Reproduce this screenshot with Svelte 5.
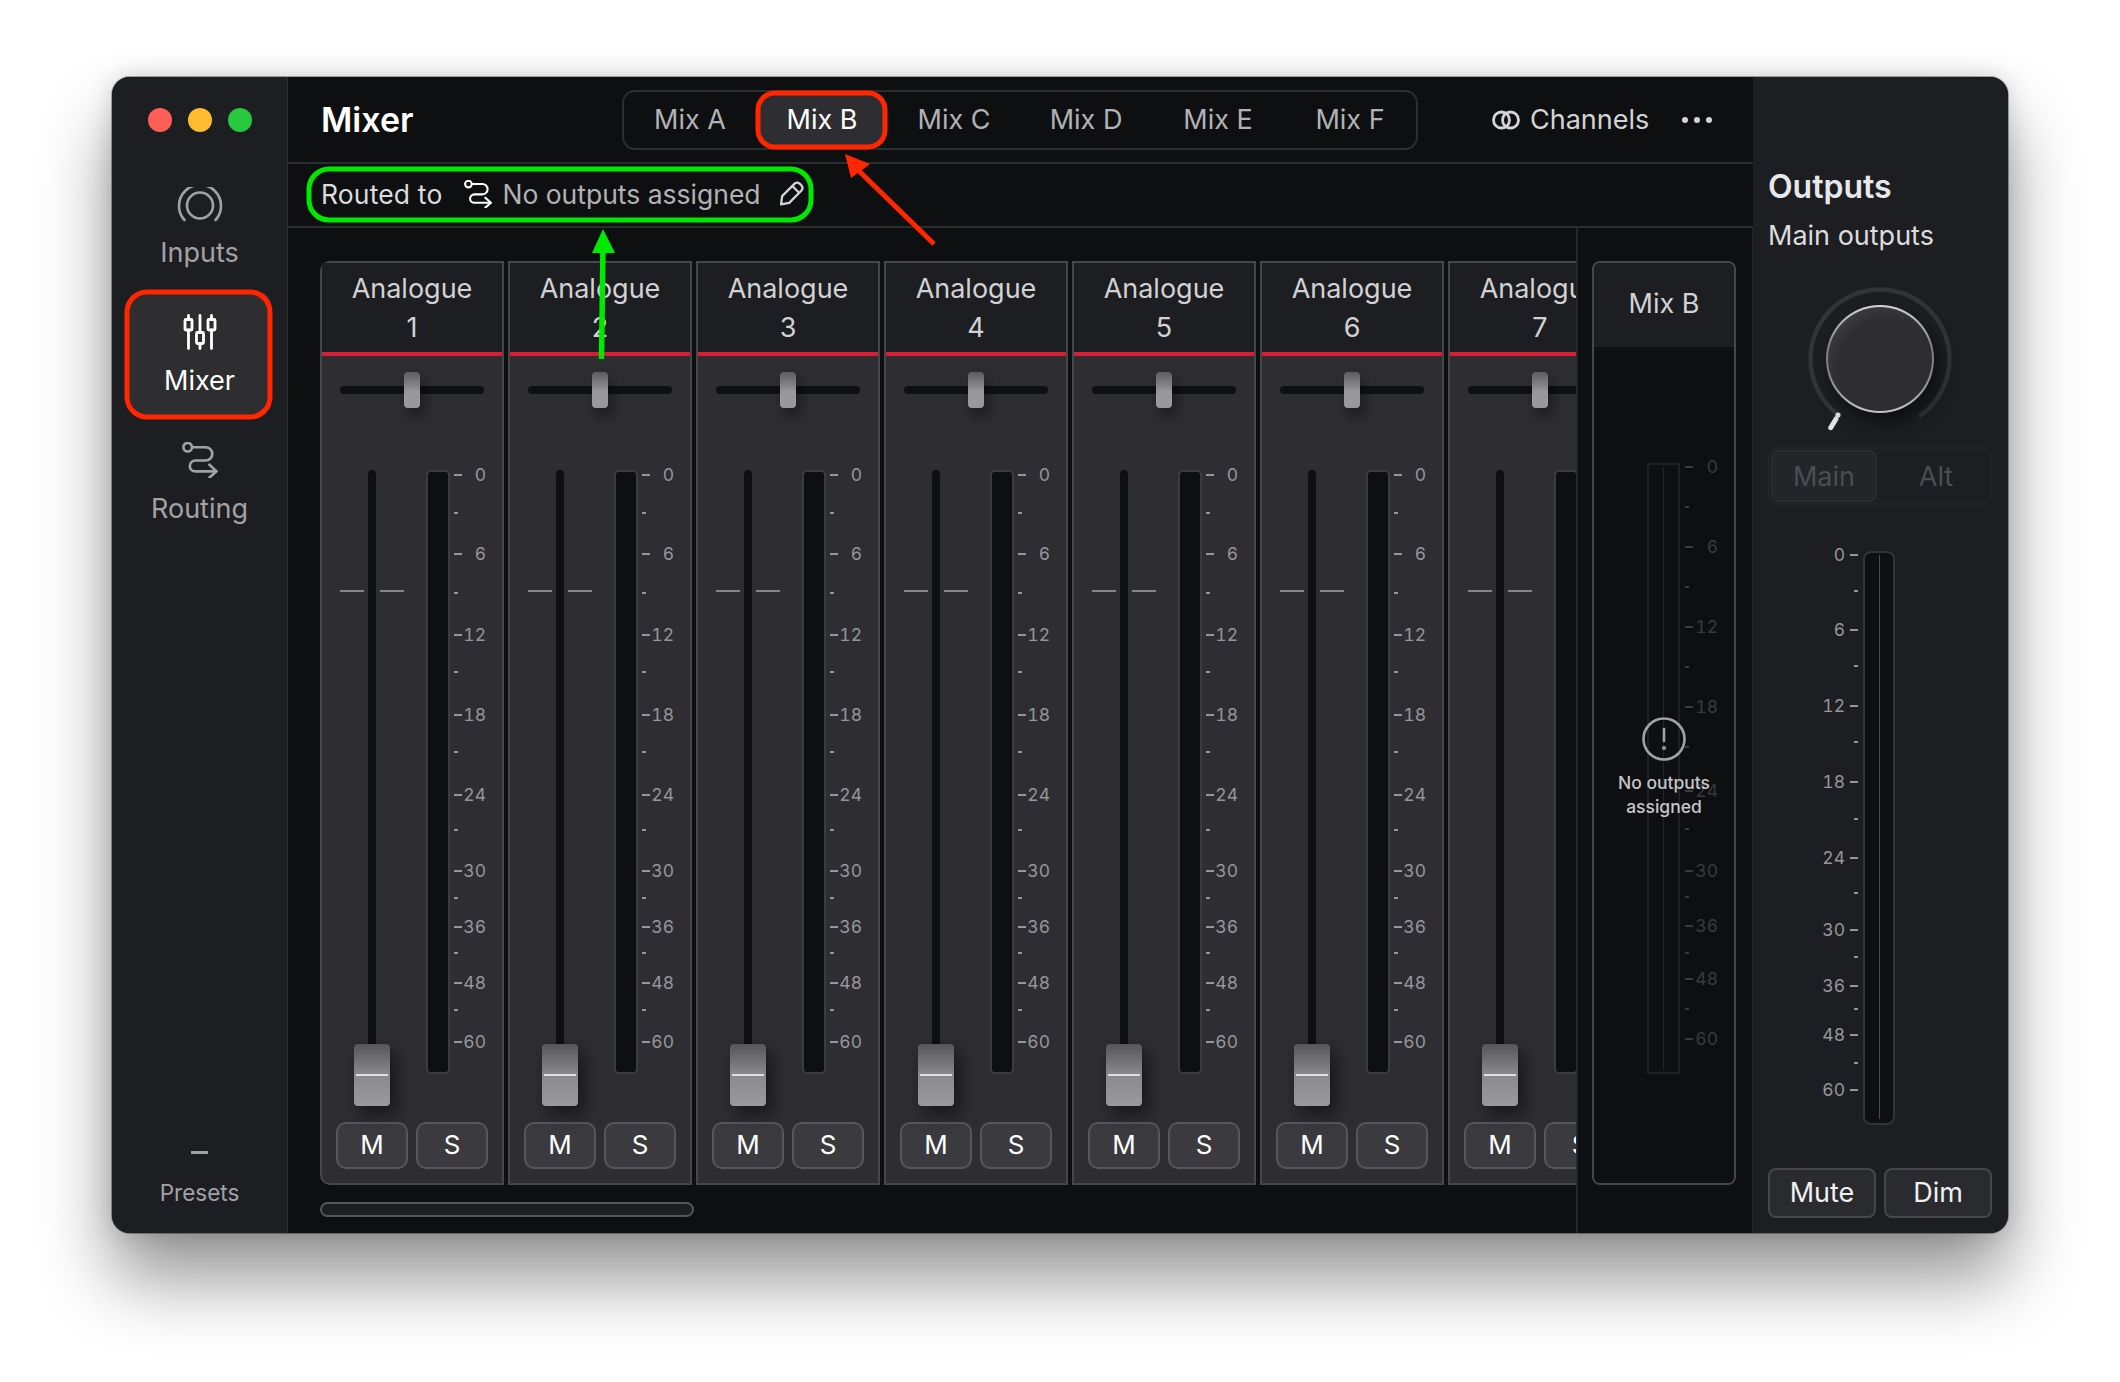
<script>
	const tabs = ['Mix A', 'Mix B', 'Mix C', 'Mix D', 'Mix E', 'Mix F'];
	const channels = [1, 2, 3, 4, 5, 6, 7];

	// [label, y] relative to the top of each meter, label '' is a minor tick
	const stripMarks = [
		['0', 4.5], ['', 42.7], ['6', 84], ['', 123], ['12', 165], ['', 202], ['18', 245], ['', 282],
		['24', 325], ['', 360], ['30', 401], ['', 428], ['36', 457], ['', 483], ['48', 513], ['', 540], ['60', 572]
	];
	const mixMarks = [
		['0', 4], ['', 44], ['6', 84], ['', 124], ['12', 164], ['', 204], ['18', 244], ['', 284],
		['24', 328], ['', 366], ['30', 408], ['', 434], ['36', 463], ['', 490], ['48', 516], ['', 546], ['60', 576]
	];
	const outMarks = [
		['0', 4], ['', 40], ['6', 79], ['', 115], ['12', 155], ['', 191], ['18', 231], ['', 268],
		['24', 307], ['', 342], ['30', 379], ['', 406], ['36', 435], ['', 458], ['48', 484], ['', 512], ['60', 539]
	];
</script>

{#snippet routeIcon(size)}
	<svg width={size} height={size} viewBox="0 0 38 38" fill="none" stroke="currentColor" stroke-width="2.8" stroke-linecap="round" stroke-linejoin="round">
		<circle cx="6" cy="5.5" r="4.5" />
		<path d="M11 5.5H25a7 7 0 0 1 0 14H14a5.75 5.75 0 0 0 0 11.5H36" />
		<path d="M29 24l7.5 7-7.5 6.5" />
	</svg>
{/snippet}

{#snippet scale(marks, cls)}
	<div class="scale {cls}">
		{#each marks as [label, y]}
			<div class="mark" class:minor={!label} style="top: {y}px">
				<i></i>
				{#if label}<span>{label}</span>{/if}
			</div>
		{/each}
	</div>
{/snippet}

<div class="page">
	<div class="window">
		<aside class="sidebar">
			<div class="lights">
				<span class="red"></span>
				<span class="yellow"></span>
				<span class="green"></span>
			</div>
			<nav>
				<div class="nav-item">
					<svg width="46" height="36" viewBox="0 0 46 36" fill="none" stroke="currentColor" stroke-width="2.6" stroke-linecap="round">
						<path d="M7.5 33a21 21 0 1 1 31 0" />
						<circle cx="23" cy="18.5" r="13" />
					</svg>
					<span>Inputs</span>
				</div>
				<div class="nav-item active">
					<svg width="36" height="36" viewBox="0 0 36 36" fill="none" stroke="currentColor" stroke-width="2.8" stroke-linecap="round">
						<path d="M6.5 1.5v4M6.5 16v18.5M18 1.5v17M18 30v4.5M29.5 1.5v4M29.5 16v18.5" />
						<rect x="3" y="5.5" width="7" height="10.5" rx="1" />
						<rect x="14.5" y="18.5" width="7" height="11" rx="1" />
						<rect x="26" y="5.5" width="7" height="10.5" rx="1" />
					</svg>
					<span>Mixer</span>
				</div>
				<div class="nav-item">
					{@render routeIcon(36)}
					<span>Routing</span>
				</div>
			</nav>
			<div class="presets">
				<i></i>
				<span>Presets</span>
			</div>
		</aside>

		<main>
			<header class="topbar">
				<h1>Mixer</h1>
				<div class="tabs">
					{#each tabs as tab}
						<div class="tab" class:active={tab === 'Mix B'}>{tab}</div>
					{/each}
				</div>
				<div class="channels-btn">
					<svg width="28" height="20" viewBox="0 0 28 20" fill="none" stroke="currentColor" stroke-width="2.8">
						<circle cx="9.5" cy="10" r="8" />
						<circle cx="18.5" cy="10" r="8" />
					</svg>
					<span>Channels</span>
				</div>
				<div class="dots"><i></i><i></i><i></i></div>
			</header>

			<div class="routebar">
				<span class="routed">Routed to</span>
				<span class="route-icon">{@render routeIcon(28)}</span>
				<span class="route-target">No outputs assigned</span>
				<svg class="pencil" width="25" height="25" viewBox="0 0 24 24" fill="none" stroke="currentColor" stroke-width="2.2" stroke-linejoin="round">
					<path d="M2 22.5l1-8L15 2.5q2.5-2 4.8 0l1.8 1.8q2 2.5 0 4.8L9.8 21z" />
					<path d="M13 5l6.5 6.5" />
				</svg>
			</div>

			<div class="content">
				<section class="strips-pane">
					<div class="strips">
						{#each channels as ch}
							<div class="strip">
								<div class="strip-head">
									<div>Analogue</div>
									<div>{ch}</div>
								</div>
								<div class="pan">
									<div class="pan-track"></div>
									<div class="pan-thumb"></div>
								</div>
								<div class="faders">
									<div class="fader">
										<i class="peak left"></i>
										<i class="peak right"></i>
										<div class="fader-track"></div>
										<div class="fader-thumb"></div>
									</div>
									<div class="meter"></div>
									{@render scale(stripMarks, 'strip-scale')}
								</div>
								<div class="ms">
									<button>M</button>
									<button>S</button>
								</div>
							</div>
						{/each}
					</div>
					<div class="scrollbar"></div>
				</section>

				<section class="mix-pane">
					<div class="mix-card">
						<div class="mix-head">Mix B</div>
						<div class="mix-body">
							<div class="mix-meter"></div>
							{@render scale(mixMarks, 'mix-scale')}
							<div class="no-outputs">
								<svg width="46" height="46" viewBox="0 0 46 46" fill="none" stroke="currentColor" stroke-width="2.6" stroke-linecap="round">
									<circle cx="23" cy="23" r="20.5" />
									<path d="M23 13v12" />
									<circle cx="23" cy="32" r="0.8" />
								</svg>
								<p>No outputs<br />assigned</p>
							</div>
						</div>
					</div>
				</section>
			</div>
		</main>

		<aside class="outputs">
			<h2>Outputs</h2>
			<div class="sub">Main outputs</div>
			<div class="knob-wrap">
				<svg class="knob-ring" width="150" height="150" viewBox="0 0 150 150" fill="none" stroke-linecap="round">
					<path d="M31.7 129.4A69.5 69.5 0 1 1 115.7 131.3" stroke="#333437" stroke-width="4.5" />
					<circle cx="33" cy="131" r="2.6" fill="#e2e2e2" />
					<path d="M31 135l-5.3 8.7" stroke="#e2e2e2" stroke-width="5" />
				</svg>
				<div class="knob"></div>
			</div>
			<div class="segment">
				<div class="seg on">Main</div>
				<div class="seg">Alt</div>
			</div>
			<div class="out-meter-row">
				{@render scale(outMarks, 'out-scale')}
				<div class="out-meter"></div>
			</div>
			<div class="out-buttons">
				<button>Mute</button>
				<button>Dim</button>
			</div>
		</aside>
	</div>

	<!-- annotations drawn on top of the screenshot -->
	<svg class="annotations" width="2120" height="1382" viewBox="0 0 2120 1382" fill="none">
		<rect x="127" y="292" width="143" height="125" rx="20" stroke="#ff2600" stroke-width="5" />
		<rect x="758" y="93" width="127" height="54" rx="17" stroke="#ff2600" stroke-width="5" />
		<rect x="309" y="169" width="502" height="51" rx="20" stroke="#00e900" stroke-width="5" />
		<line x1="934" y1="244" x2="858" y2="170" stroke="#ff2600" stroke-width="5" />
		<polygon points="845,154 870,164 851,178" fill="#ff2600" />
		<line x1="601.5" y1="359" x2="603" y2="245" stroke="#00e900" stroke-width="5.5" />
		<polygon points="603,229 615,253 592,253" fill="#00e900" />
	</svg>
</div>

<style>
	:global(body) {
		margin: 0;
		background: #fff;
		font-family: Inter, 'Liberation Sans', sans-serif;
	}

	.page {
		position: relative;
		width: 2120px;
		height: 1382px;
		overflow: hidden;
		padding: 77px 0 0 112px;
		box-sizing: border-box;
	}

	.annotations {
		position: absolute;
		left: 0;
		top: 0;
		pointer-events: none;
	}

	.window {
		display: flex;
		width: 1896px;
		height: 1156px;
		border-radius: 18px;
		overflow: hidden;
		background: #0e0f11;
		box-shadow: 0 0 0 1px rgba(0, 0, 0, 0.3), 0 46px 72px rgba(0, 0, 0, 0.42), 0 0 26px rgba(0, 0, 0, 0.16);
	}

	/* sidebar */
	.sidebar {
		width: 175px;
		flex: none;
		display: flex;
		flex-direction: column;
		align-items: center;
		background: #1d1e22;
		border-right: 1px solid #2e2f32;
		color: #a2a2a5;
		font-size: 27px;
	}

	.lights {
		display: flex;
		gap: 16px;
		margin-top: 31px;
	}

	.lights span {
		width: 24px;
		height: 24px;
		border-radius: 50%;
	}

	.red { background: #ff5f57; }
	.yellow { background: #febc2e; }
	.green { background: #28c840; }

	nav {
		display: flex;
		flex-direction: column;
		gap: 3px;
		margin-top: 33px;
	}

	.nav-item {
		width: 143px;
		height: 124px;
		box-sizing: border-box;
		padding-top: 22px;
		display: flex;
		flex-direction: column;
		align-items: center;
		border-radius: 12px;
	}

	.nav-item span {
		margin-top: 12px;
		line-height: 36px;
	}

	.nav-item.active {
		background: #2e2e31;
		color: #fff;
	}

	.nav-item.active span {
		margin-top: 13px;
	}

	.nav-item:last-child {
		padding-top: 23px;
	}

	.nav-item:last-child span {
		margin-top: 13px;
	}

	.presets {
		margin-top: auto;
		margin-bottom: 27px;
		display: flex;
		flex-direction: column;
		align-items: center;
		font-size: 22.5px;
	}

	.presets i {
		width: 17px;
		height: 3px;
		background: #a2a2a5;
		margin-bottom: 26px;
	}

	.presets span {
		line-height: 26px;
	}

	/* main column */
	main {
		flex: none;
		width: 1465px;
		display: flex;
		flex-direction: column;
	}

	.topbar {
		height: 87px;
		box-sizing: border-box;
		flex: none;
		display: flex;
		align-items: center;
		padding-left: 33px;
		border-bottom: 2px solid #2c2d30;
	}

	h1 {
		margin: 0;
		width: 301px;
		color: #fff;
		font-size: 34px;
		font-weight: 600;
	}

	.tabs {
		display: flex;
		width: 796px;
		height: 60px;
		box-sizing: border-box;
		border: 2px solid #2c2d30;
		border-radius: 13px;
	}

	.tab {
		flex: 1;
		display: flex;
		align-items: center;
		justify-content: center;
		margin: 1px 2px;
		color: #b2b2b5;
		font-size: 27px;
		border-radius: 12px;
	}

	.tab.active {
		background: #2e2e32;
		color: #fff;
	}

	.channels-btn {
		display: flex;
		align-items: center;
		gap: 10px;
		margin-left: 74px;
		color: #d4d4d6;
		font-size: 27px;
	}

	.dots {
		display: flex;
		gap: 6px;
		margin-left: 33px;
	}

	.dots i {
		width: 6px;
		height: 6px;
		border-radius: 50%;
		background: #d4d4d6;
	}

	.routebar {
		height: 64px;
		box-sizing: border-box;
		flex: none;
		display: flex;
		align-items: center;
		padding: 0 0 3px 33px;
		border-bottom: 2px solid #2c2d30;
		font-size: 26.5px;
	}

	.routed {
		color: #dcdcde;
		letter-spacing: 0.15px;
	}

	.route-icon {
		display: flex;
		color: #fff;
		margin-left: 22px;
	}

	.route-target {
		margin-left: 10px;
		color: #b2b2b5;
	}

	.pencil {
		margin-left: 18px;
		color: #d4d4d6;
	}

	.content {
		flex: 1;
		min-height: 0;
		display: flex;
	}

	.strips-pane {
		width: 1290px;
		flex: none;
		box-sizing: border-box;
		padding: 33px 0 0 32px;
		overflow: hidden;
		border-right: 2px solid #26272a;
	}

	.strips {
		display: flex;
		gap: 4px;
	}

	/* channel strip */
	.strip {
		flex: none;
		width: 184px;
		height: 924px;
		box-sizing: border-box;
		border: 2px solid #47474b;
		background: #2d2d32;
		display: flex;
		flex-direction: column;
	}

	.strip:first-child {
		border-radius: 10px 0 0 10px;
	}

	.strip-head {
		height: 93px;
		box-sizing: border-box;
		padding-top: 6px;
		flex: none;
		background: #1d1e22;
		border-bottom: 4px solid #d81e34;
		color: #d2d2d4;
		font-size: 27px;
		line-height: 39px;
		text-align: center;
	}

	.pan {
		position: relative;
		height: 36px;
		margin-top: 16px;
		flex: none;
	}

	.pan-track {
		position: absolute;
		left: 18px;
		right: 18px;
		top: 14px;
		height: 8px;
		border-radius: 4px;
		background: #0f1012;
	}

	.pan-thumb {
		position: absolute;
		left: 82px;
		top: 0;
		width: 16px;
		height: 36px;
		border-radius: 4px;
		background: linear-gradient(#5b5b60, #98989d 55%);
		box-shadow: 4px 8px 14px rgba(0, 0, 0, 0.4);
	}

	.faders {
		display: flex;
		height: 636px;
		margin-top: 62px;
		padding-left: 32px;
		flex: none;
	}

	.fader {
		position: relative;
		width: 36px;
		display: flex;
		flex-direction: column;
		align-items: center;
		flex: none;
	}

	.fader-track {
		flex: 1;
		width: 8px;
		background: #0f1012;
		border-radius: 4px 4px 0 0;
	}

	.fader-thumb {
		position: relative;
		width: 36px;
		height: 62px;
		flex: none;
		box-sizing: border-box;
		border-radius: 4px;
		background: linear-gradient(#56565a, #8a8a8e 50%, #9a9a9e);
		box-shadow: 6px 8px 18px rgba(0, 0, 0, 0.5);
	}

	.fader-thumb::after {
		content: '';
		position: absolute;
		left: 2px;
		right: 2px;
		top: 30px;
		height: 2px;
		background: #e0e0e2;
	}

	.peak {
		position: absolute;
		top: 120px;
		width: 24px;
		height: 2px;
		background: #86868a;
	}

	.peak.left { left: -14px; }
	.peak.right { left: 26px; }

	.meter {
		margin-left: 36px;
		width: 24px;
		height: 604px;
		box-sizing: border-box;
		flex: none;
		background: #0e0f11;
		border: 2px solid #3c3c40;
		border-radius: 5px;
	}

	.scale {
		position: relative;
		flex: none;
	}

	.mark {
		position: absolute;
		height: 0;
		display: flex;
		align-items: center;
		font-size: 17.5px;
		font-variant-numeric: tabular-nums;
		line-height: 20px;
	}

	.mark i {
		flex: none;
		width: 8px;
		height: 2px;
		background: currentColor;
	}

	.mark.minor i {
		width: 4px;
	}

	.strip-scale {
		width: 40px;
		margin-left: 4px;
		color: #96969a;
	}

	.strip-scale .mark,
	.mix-scale .mark {
		left: 0;
		right: 0;
	}

	.mark span {
		margin-left: auto;
	}

	.strip-scale .mark span {
		margin-right: 8px;
	}

	.ms {
		display: flex;
		gap: 8px;
		margin-top: 16px;
		padding-left: 14px;
	}

	button {
		font-family: inherit;
		padding: 0;
		cursor: pointer;
	}

	.ms button {
		width: 72px;
		height: 47px;
		border: 2px solid #57575b;
		border-radius: 10px;
		background: #3a3a3f;
		color: #fff;
		font-size: 26px;
		padding-bottom: 2px;
	}

	.scrollbar {
		margin-top: 17px;
		width: 374px;
		height: 15px;
		box-sizing: border-box;
		background: #1d1e20;
		border: 2px solid #56565a;
		border-radius: 8px;
	}

	/* selected mix */
	.mix-pane {
		flex: 1;
		padding: 33px 16px 0 14px;
		border-right: 1px solid #26272a;
	}

	.mix-card {
		height: 924px;
		box-sizing: border-box;
		border: 2px solid #47474b;
		border-radius: 8px;
		overflow: hidden;
		display: flex;
		flex-direction: column;
	}

	.mix-head {
		height: 84px;
		flex: none;
		display: flex;
		align-items: center;
		justify-content: center;
		padding-bottom: 3px;
		box-sizing: border-box;
		background: #1d1e22;
		color: #d2d2d4;
		font-size: 27px;
	}

	.mix-body {
		position: relative;
		flex: 1;
		display: flex;
		padding: 116px 0 0 53px;
		background: #0e0f11;
	}

	.mix-meter {
		position: relative;
		width: 33px;
		height: 611px;
		box-sizing: border-box;
		border: 2px solid #1f2023;
		flex: none;
	}

	.mix-meter::after {
		content: '';
		position: absolute;
		left: 14px;
		top: 2px;
		bottom: 2px;
		width: 1px;
		background: #232427;
	}

	.mix-scale {
		width: 33px;
		margin-left: 5px;
		color: #3a3a3e;
	}

	.no-outputs {
		position: absolute;
		left: 0;
		right: 0;
		top: 369px;
		display: flex;
		flex-direction: column;
		align-items: center;
		color: #a2a2a5;
	}

	.no-outputs p {
		margin: 9px 0 0;
		text-align: center;
		color: #c6c6c8;
		font-size: 17.5px;
		font-weight: 500;
		line-height: 24px;
	}

	/* outputs column */
	.outputs {
		flex: 1;
		min-width: 0;
		box-sizing: border-box;
		padding: 91px 16px 0 15px;
		background: #1d1e22;
		display: flex;
		flex-direction: column;
	}

	h2 {
		margin: 0;
		color: #e8e8ea;
		font-size: 32px;
		font-weight: 600;
		line-height: 38px;
	}

	.sub {
		margin-top: 11px;
		color: #dcdcde;
		font-size: 27px;
		line-height: 38px;
	}

	.knob-wrap {
		position: relative;
		align-self: center;
		width: 150px;
		height: 150px;
		margin-top: 29px;
	}

	.knob-ring {
		position: absolute;
		left: 0;
		top: 0;
	}

	.knob {
		position: absolute;
		left: 21px;
		top: 21px;
		width: 108px;
		height: 108px;
		box-sizing: border-box;
		border: 2px solid transparent;
		border-radius: 50%;
		background:
			radial-gradient(circle at 58% 60%, #2e2d32 58%, #4e4e52 100%) padding-box,
			linear-gradient(#d4d4d6, #808084 40%, #808084 60%, #c4c4c6) border-box;
		box-shadow: 6px 10px 18px rgba(0, 0, 0, 0.5);
	}

	.segment {
		display: flex;
		height: 58px;
		margin-top: 13px;
		box-sizing: border-box;
		border: 2px solid #232427;
		border-radius: 10px;
		padding: 1px;
		color: #4c4d50;
		font-size: 27px;
	}

	.seg {
		width: 106px;
		display: flex;
		align-items: center;
		justify-content: center;
	}

	.seg + .seg {
		flex: 1;
		padding-left: 6px;
	}

	.seg.on {
		background: #242529;
		border: 2px solid #2a2b2e;
		border-radius: 8px;
		box-sizing: border-box;
	}

	.out-meter-row {
		display: flex;
		margin-top: 46px;
		height: 574px;
	}

	.out-scale {
		width: 73px;
		margin-left: 17px;
		margin-right: 5px;
		color: #96969a;
	}

	.out-scale .mark {
		right: 0;
		flex-direction: row-reverse;
	}

	.out-scale .mark span {
		margin: 0 5px 0 0;
	}

	.out-meter {
		position: relative;
		width: 32px;
		height: 574px;
		box-sizing: border-box;
		background: #0e0f11;
		border: 2px solid #333437;
		border-radius: 8px;
	}

	.out-meter::after {
		content: '';
		position: absolute;
		left: 13.5px;
		top: 2px;
		bottom: 4px;
		width: 1px;
		background: #4a4a4e;
	}

	.out-buttons {
		display: flex;
		gap: 8px;
		margin-top: 43px;
	}

	.out-buttons button {
		width: 108px;
		height: 50px;
		border: 2px solid #46474a;
		border-radius: 8px;
		background: #2a2b2e;
		color: #f0f0f2;
		font-size: 27px;
		padding-bottom: 2px;
	}
</style>
